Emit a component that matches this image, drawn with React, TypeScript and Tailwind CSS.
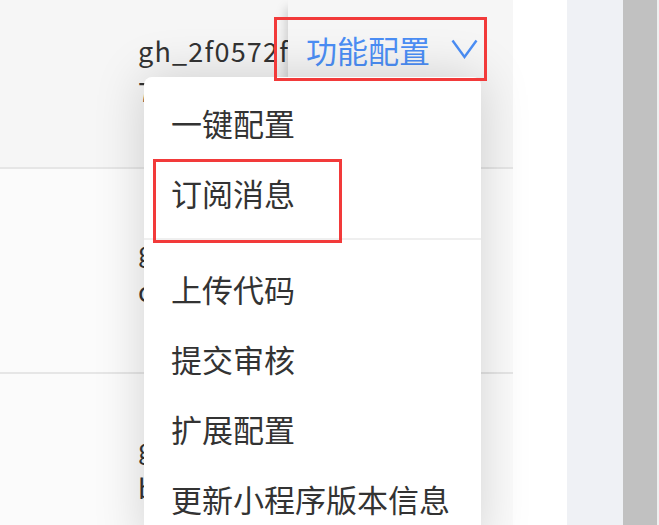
const ROWS = [
  { id: 'row-1', lines: ['gh_2f0572f', '7c31d08b2f'], bg: 'bg-[#f6f6f6]', h: 'h-[169px]', pt: 'pt-[31px]', active: true },
  { id: 'row-2', lines: ['gh_91d3a7c5be02', 'c84f1e06a7'], bg: 'bg-[#fbfbfb]', h: 'h-[205px]', pt: 'pt-[62px]', active: false },
  { id: 'row-3', lines: ['gh_6b2e90d4f713', 'b05a9c2e48'], bg: 'bg-[#fbfbfb]', h: 'h-[205px]', pt: 'pt-[54px]', active: false },
]

const MENU_TOP = ['一键配置', '订阅消息']
const MENU_BOTTOM = ['上传代码', '提交审核', '扩展配置', '更新小程序版本信息']

function MenuItem({ label }: { label: string }) {
  return (
    <div className="flex h-[70px] items-center pl-[27px] text-[31px] leading-none text-[#333]">
      {label}
    </div>
  )
}

export default function App() {
  return (
    <div
      className="flex h-[525px] w-[659px] overflow-hidden bg-white"
      style={{ fontFamily: '"Noto Sans CJK SC", "Noto Sans", sans-serif' }}
    >
      {/* table */}
      <div className="relative flex w-[513px] shrink-0 flex-col">
        {ROWS.map((row) => (
          <div
            key={row.id}
            className={`flex shrink-0 border-b-2 border-[#e6e6e6] ${row.h} ${row.bg}`}
          >
            <div className="w-[138px] shrink-0" />
            <div
              className={`w-[150px] shrink-0 overflow-hidden whitespace-nowrap text-[27px] leading-[40px] tracking-[1.2px] text-[#333] ${row.pt}`}
            >
              {row.lines.map((l) => (
                <div key={l}>{l}</div>
              ))}
            </div>
            <div
              className={`relative w-[225px] shrink-0 shadow-[-10px_0_10px_-8px_rgba(0,0,0,0.18)] ${row.bg}`}
            >
              {row.active && (
                <div className="flex items-center pl-[18px] pt-[30px] text-[31px] leading-[40px] text-[#4b8ef5]">
                  <span>功能配置</span>
                  <svg
                    className="ml-[21px] mt-[-2px]"
                    width="27"
                    height="20"
                    viewBox="0 0 27 20"
                    fill="none"
                    stroke="currentColor"
                    strokeWidth="2.4"
                  >
                    <polyline points="1.5,1.5 13.5,18 25.5,1.5" />
                  </svg>
                </div>
              )}
            </div>
          </div>
        ))}
        <div className="flex-1 bg-[#fbfbfb]" />

        {/* dropdown */}
        <div className="absolute left-[144px] top-[77px] h-[470px] w-[337px] rounded-t-lg bg-white pt-[10px] shadow-[0_0_50px_rgba(0,0,0,0.17)]">
          {MENU_TOP.map((m) => (
            <MenuItem key={m} label={m} />
          ))}
          <div className="mb-[13px] mt-[11px] h-[2px] bg-[#efefef]" />
          {MENU_BOTTOM.map((m) => (
            <MenuItem key={m} label={m} />
          ))}
        </div>

        {/* annotation boxes */}
        <div className="absolute left-[274px] top-[17px] h-[64px] w-[213px] border-[3px] border-[#f23a3a]" />
        <div className="absolute left-[153px] top-[159px] h-[84px] w-[189px] border-[3px] border-[#f23a3a]" />
      </div>

      <div className="w-[54px] shrink-0 bg-white" />
      <div className="w-[56px] shrink-0 bg-[#eff1f5]" />
      <div className="w-[34px] shrink-0 bg-[#c1c1c1]" />
      <div className="flex-1 bg-[#f0f0f0]" />
    </div>
  )
}
